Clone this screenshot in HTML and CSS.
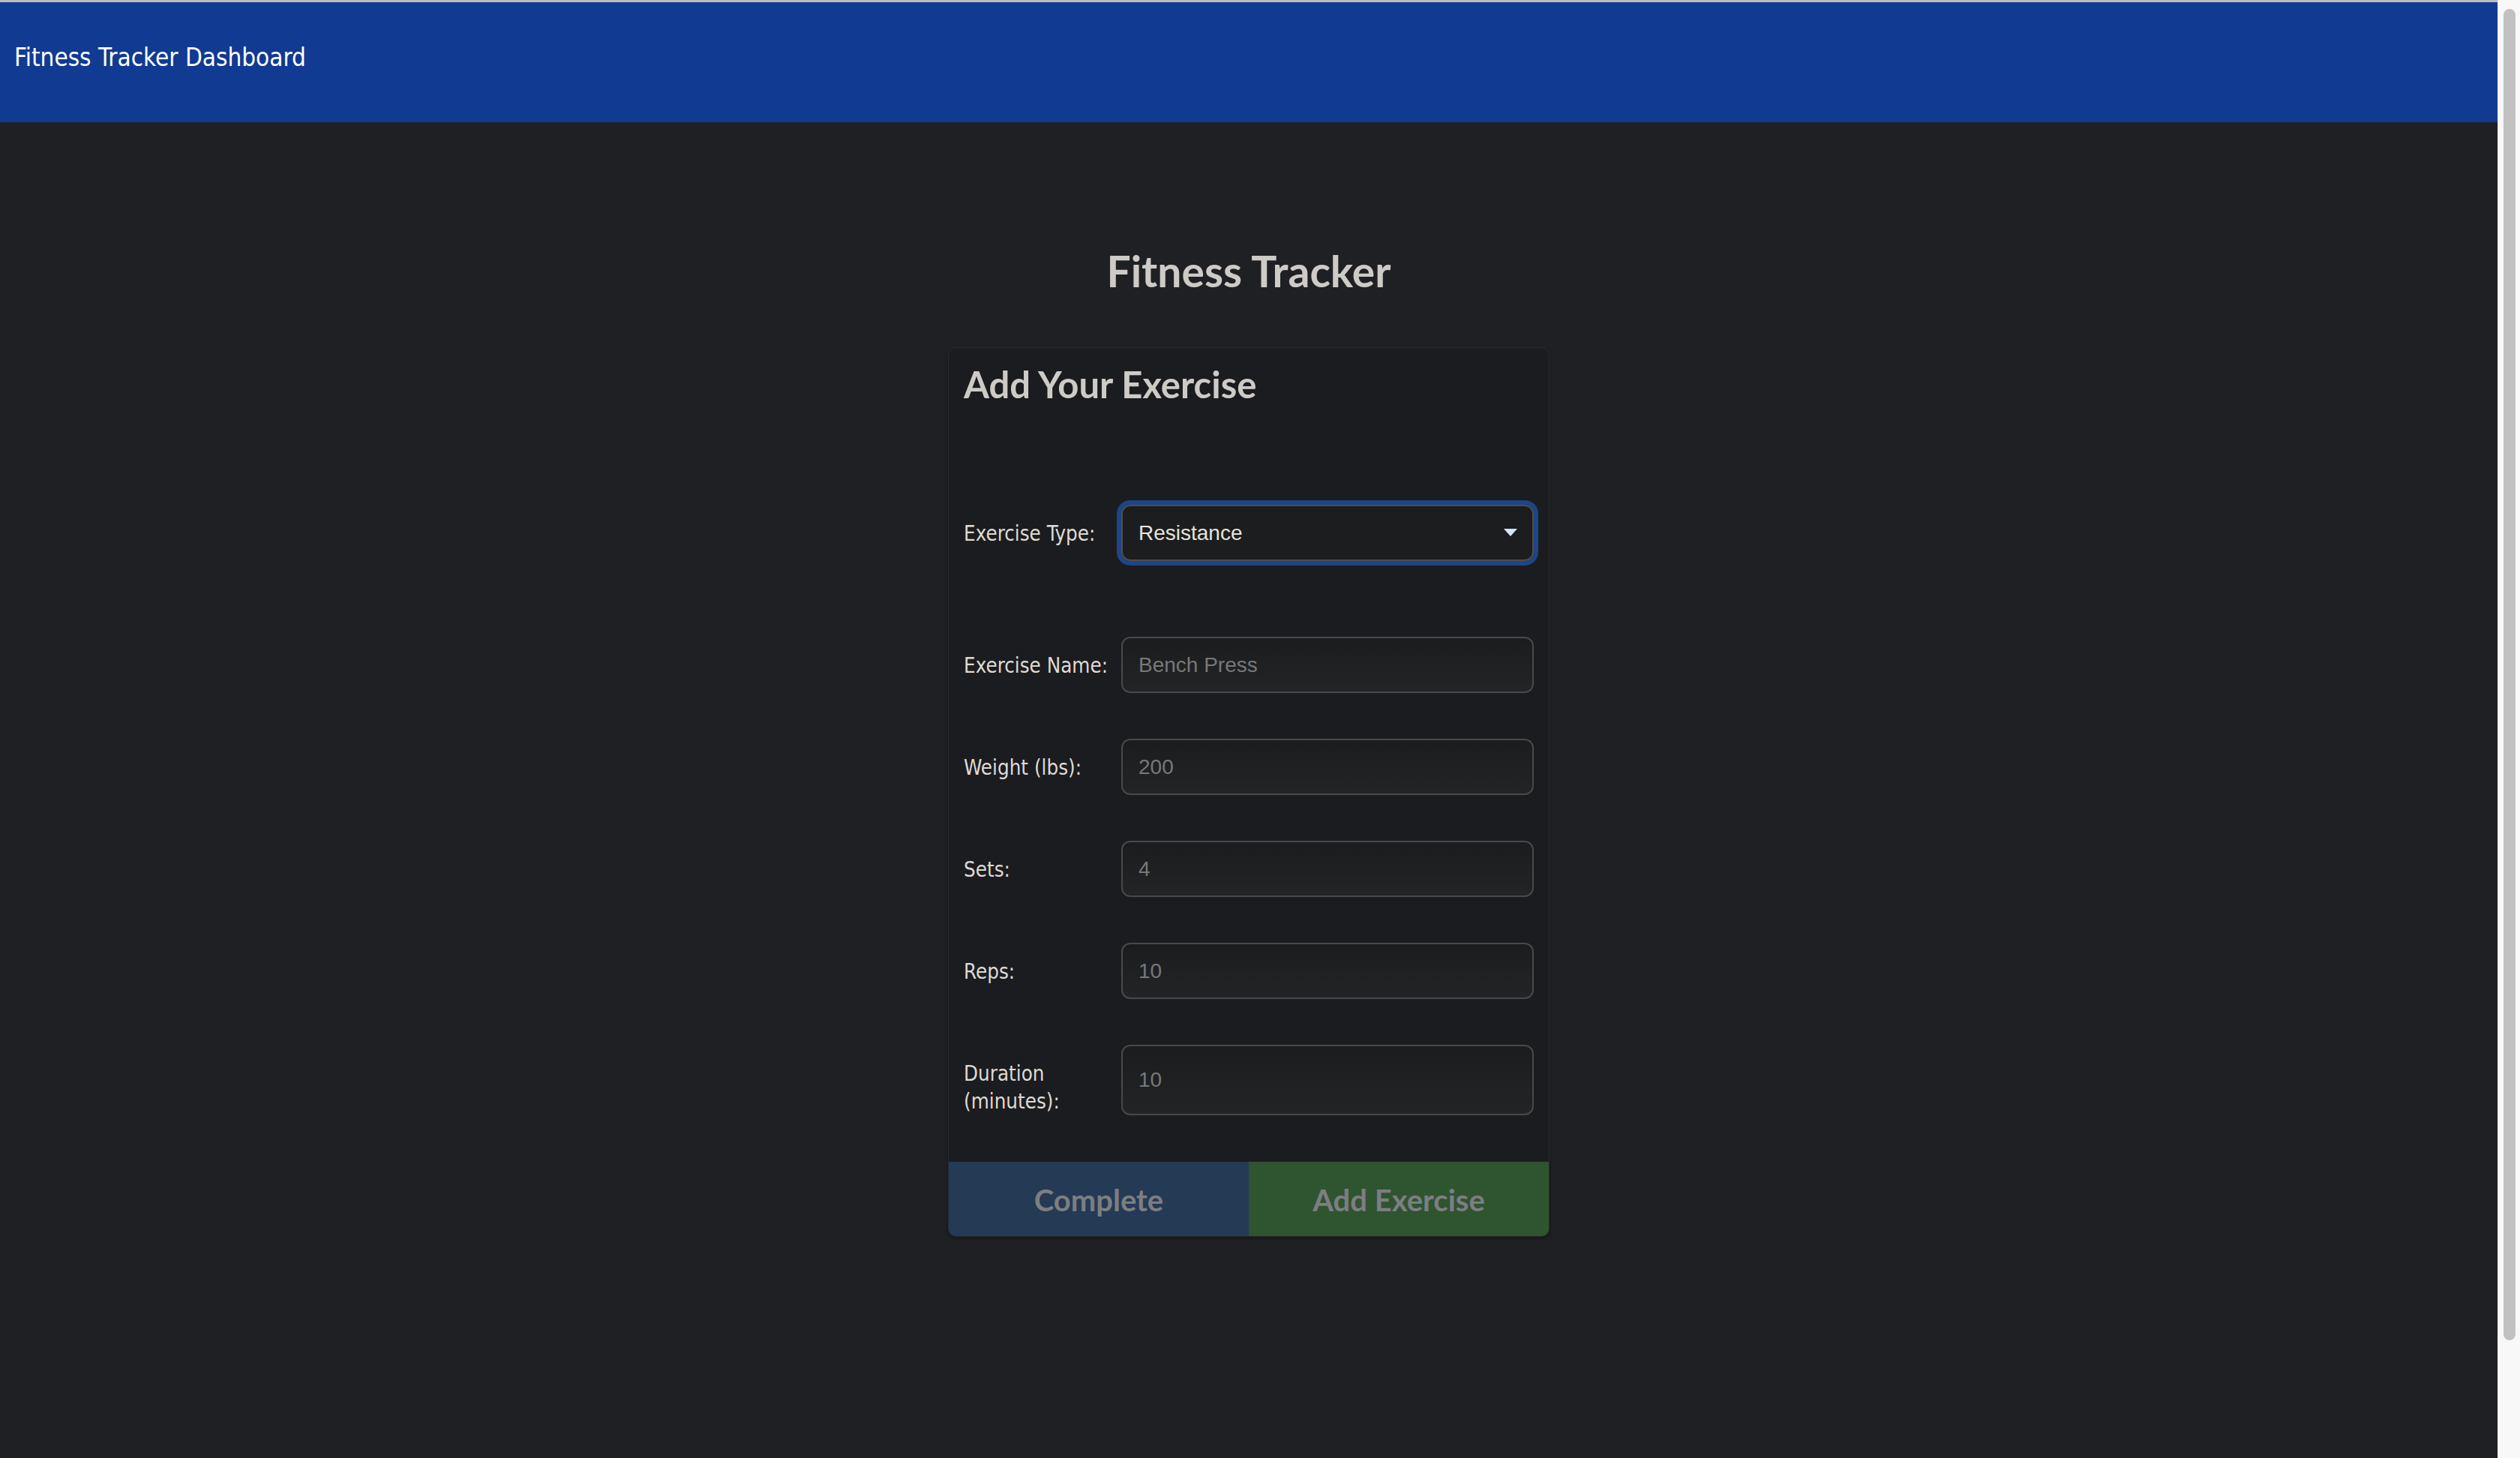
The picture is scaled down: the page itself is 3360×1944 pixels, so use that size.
FILE: index.html
```html
<!DOCTYPE html>
<html lang="en">
<head>
<meta charset="utf-8">
<title>Fitness Tracker Dashboard</title>
<link rel="stylesheet" href="styles.css">
</head>
<body class="app">
  <div class="page">
    <header class="topbar">
      <div class="brand">Fitness Tracker Dashboard</div>
    </header>
    <main class="content">
      <h1 class="title">Fitness Tracker</h1>
      <section class="card">
        <form class="form">
          <h2 class="card-title">Add Your Exercise</h2>
          <div class="row row-type">
            <label class="label" for="type">Exercise Type:</label>
            <div class="select-wrap">
              <select id="type" class="select">
                <option>Resistance</option>
                <option>Cardio</option>
              </select>
              <svg class="caret" width="18" height="10" viewBox="0 0 18 10"><path d="M0 0 H18 L9 10 Z" fill="#d5e5ff"/></svg>
            </div>
          </div>
          <div class="row">
            <label class="label" for="name">Exercise Name:</label>
            <input id="name" class="input" type="text" placeholder="Bench Press">
          </div>
          <div class="row">
            <label class="label" for="weight">Weight (lbs):</label>
            <input id="weight" class="input" type="text" placeholder="200">
          </div>
          <div class="row">
            <label class="label" for="sets">Sets:</label>
            <input id="sets" class="input" type="text" placeholder="4">
          </div>
          <div class="row">
            <label class="label" for="reps">Reps:</label>
            <input id="reps" class="input" type="text" placeholder="10">
          </div>
          <div class="row row-last">
            <label class="label" for="duration">Duration (minutes):</label>
            <input id="duration" class="input" type="text" placeholder="10">
          </div>
        </form>
        <div class="actions">
          <button class="btn btn-complete" type="button">Complete</button>
          <button class="btn btn-add" type="button">Add Exercise</button>
        </div>
      </section>
    </main>
  </div>
  <div class="scrollbar"><div class="thumb"></div></div>
</body>
</html>
```

FILE: styles.css
```css
html, body {
  margin: 0;
  padding: 0;
  height: 100%;
  overflow: hidden;
}

.app {
  display: flex;
  height: 100vh;
  background: #1f2023;
}

.page {
  flex: 1;
  min-width: 0;
  background: #1f2023;
}

.topbar {
  border-top: 3px solid #bcbcbc;
  background: #113a92;
  height: 106px;
  padding: 54px 19px 0;
}

.brand {
  font-family: "DejaVu Sans Condensed", "DejaVu Sans", sans-serif;
  font-stretch: semi-condensed;
  font-size: 33px;
  line-height: 40px;
  color: #ffffff;
}

.content {
  display: flex;
  flex-direction: column;
  align-items: center;
  padding-top: 163px;
}

.title {
  margin: 0 0 67px;
  font-family: Lato, sans-serif;
  font-weight: 700;
  font-size: 57px;
  line-height: 70px;
  color: #cecbc7;
}

.card {
  width: 802px;
  box-sizing: border-box;
  background: #1b1c1f;
  border: 1px solid #2a2b2e;
  border-radius: 10px;
  overflow: hidden;
  box-shadow: 0 2px 4px rgba(0, 0, 0, 0.35);
}

.form {
  display: flex;
  flex-direction: column;
  padding: 19px 20px 62px;
}

.card-title {
  margin: 0 0 131px;
  font-family: Lato, sans-serif;
  font-weight: 700;
  font-size: 49px;
  line-height: 59px;
  color: #cecbc7;
}

.row {
  display: flex;
  align-items: stretch;
  gap: 10px;
  margin-bottom: 61px;
}

.row-type {
  margin-bottom: 101px;
}

.row-last {
  margin-bottom: 0;
}

.label {
  flex: 0 0 200px;
  padding-top: 20px;
  font-family: "DejaVu Sans Condensed", "DejaVu Sans", sans-serif;
  font-stretch: semi-condensed;
  font-size: 27.5px;
  line-height: 37px;
  color: #dedad5;
}

.input,
.select {
  flex: 1;
  min-width: 0;
  min-height: 75px;
  box-sizing: border-box;
  margin: 0;
  padding: 0 21px;
  border: 2px solid #48494b;
  border-radius: 12px;
  background: linear-gradient(#1b1c1e, #232426);
  font-family: "Liberation Sans", Arial, sans-serif;
  font-size: 28px;
  color: #e3e0db;
  outline: none;
}

.input::placeholder {
  color: #77787a;
}

.select-wrap {
  flex: 1;
  position: relative;
  display: flex;
  border-radius: 12px;
  box-shadow: 0 0 0 6px #1e4586;
}

.select {
  -webkit-appearance: none;
  appearance: none;
  width: 100%;
  background: #1c1d1f;
  border-color: #4e4e4f;
  color: #e6e3de;
}

.caret {
  position: absolute;
  right: 22px;
  top: 32px;
  pointer-events: none;
}

.actions {
  display: flex;
}

.btn {
  flex: 1;
  height: 99px;
  margin: 0;
  border: 0;
  padding: 2px 0 0;
  font-family: Lato, sans-serif;
  font-weight: 700;
  font-size: 40px;
  color: #7c7e82;
}

.btn-complete {
  background: #243a55;
}

.btn-add {
  background: #2f5430;
}

.scrollbar {
  flex: 0 0 30px;
  box-sizing: border-box;
  background: #f8f8f8;
  border-left: 1px solid #e6e6e6;
  padding: 12px 6px 0 7px;
}

.thumb {
  height: 1775px;
  border-radius: 8px;
  background: #c1c1c1;
}
```
